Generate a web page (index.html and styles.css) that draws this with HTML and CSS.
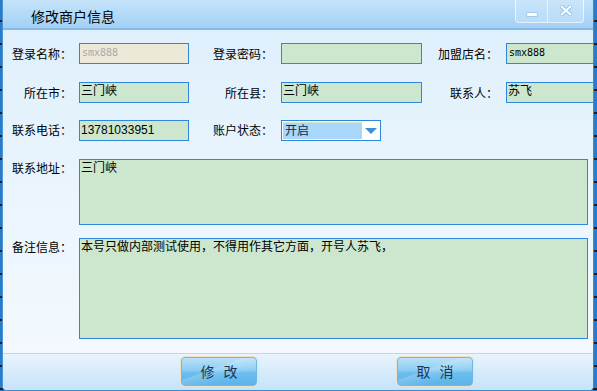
FILE: index.html
```html
<!DOCTYPE html>
<html lang="zh-CN">
<head>
<meta charset="utf-8">
<title>修改商户信息</title>
<link rel="stylesheet" href="styles.css">
</head>
<body>
<div class="window">
  <div class="titlebar">
    <span class="title">修改商户信息</span>
    <div class="win-btns">
      <div class="win-btn min"><span class="min-bar"></span></div>
      <div class="win-btn close">
        <svg width="12" height="11" viewBox="0 0 12 11"><path d="M1.5 1.5 L10.5 9.5 M10.5 1.5 L1.5 9.5" stroke="#8fc4ec" stroke-width="4" stroke-linecap="round"/><path d="M1.5 1.5 L10.5 9.5 M10.5 1.5 L1.5 9.5" stroke="#ffffff" stroke-width="2" stroke-linecap="round"/></svg>
      </div>
    </div>
  </div>
  <div class="content">
    <div class="grid">
      <div class="lbl l1">登录名称：</div>
      <div class="field disabled"><span class="mono">smx888</span></div>
      <div class="lbl l2">登录密码：</div>
      <div class="field"></div>
      <div class="lbl l3">加盟店名：</div>
      <div class="field wide"><span class="mono dark">smx888</span></div>

      <div class="lbl l1">所在市：</div>
      <div class="field">三门峡</div>
      <div class="lbl l2">所在县：</div>
      <div class="field">三门峡</div>
      <div class="lbl l3">联系人：</div>
      <div class="field wide">苏飞</div>

      <div class="lbl l1">联系电话：</div>
      <div class="field"><span class="digits">13781033951</span></div>
      <div class="lbl l2">账户状态：</div>
      <div class="select">
        <div class="sel-val">开启</div>
        <div class="sel-arrow"><span class="tri"></span></div>
      </div>
    </div>
    <div class="area-row addr">
      <div class="lbl area-lbl">联系地址：</div>
      <div class="area a1">三门峡</div>
    </div>
    <div class="area-row note">
      <div class="lbl area-lbl">备注信息：</div>
      <div class="area a2 punct">本号只做内部测试使用，不得用作其它方面，开号人苏飞，</div>
    </div>
  </div>
  <div class="footer">
    <button class="btn">修 改</button>
    <button class="btn">取 消</button>
  </div>
</div>
</body>
</html>
```

FILE: styles.css
```css
* { box-sizing: border-box; }
html, body { margin: 0; padding: 0; }
body {
  width: 597px;
  height: 391px;
  overflow: hidden;
  background: #2a7cc8 repeating-linear-gradient(to bottom, #2a7cc8 0, #2a7cc8 20px, #1b1b1b 20px, #1b1b1b 22px, #2a7cc8 22px, #2a7cc8 23px);
  font-family: "Noto Sans CJK SC", "Liberation Sans", sans-serif;
  font-size: 12px;
  color: #000;
}
.window {
  margin-left: 2px;
  width: 592px;
  height: 391px;
  border-left: 1px solid #4a92d6;
  border-right: 1px solid #3b8ad6;
  border-bottom: 1px solid #3b8ad6;
  border-radius: 0 0 5px 5px;
  overflow: hidden;
  display: flex;
  flex-direction: column;
  background: #e0f1fc;
}
.titlebar {
  height: 30px;
  flex: none;
  background: linear-gradient(to bottom, #c6e3fa 0%, #b3daf8 50%, #a4d0f5 100%);
  border-bottom: 2px solid #82bbe9;
  display: flex;
  align-items: flex-start;
  position: relative;
}
.title {
  font-size: 14px;
  line-height: 16px;
  margin: 8px 0 0 28px;
  color: #000;
}
.win-btns {
  margin-left: auto;
  margin-right: 9px;
  display: flex;
}
.win-btn {
  height: 23px;
  border: 1px solid rgba(255,255,255,0.65);
  border-top: none;
  background: linear-gradient(to bottom, rgba(255,255,255,0.08), rgba(255,255,255,0.2));
  display: flex;
  align-items: center;
  justify-content: center;
}
.win-btn.min { width: 32px; border-radius: 0 0 0 4px; border-right: none; }
.win-btn.close { width: 37px; border-radius: 0 0 4px 0; border-left: 1px solid rgba(255,255,255,0.55); }
.min-bar {
  display: block;
  width: 10px;
  height: 3px;
  margin-top: 7px;
  background: #fff;
  border-radius: 1px;
  box-shadow: 0 0 0 1px #9ccbef;
}
.close svg { display: block; margin-top: -2px; }

.content {
  flex: 1;
  background: linear-gradient(to bottom, #dff0fc 0%, #eaf5fd 50%, #f3f9fe 100%);
  padding-top: 13px;
}
.grid {
  display: grid;
  grid-template-columns: 76px 110px 92px 141px 84px 100px;
  grid-template-rows: 21px 21px 21px;
  row-gap: 18px;
  align-items: center;
}
.grid > :nth-child(n+13) { margin-top: -3px; }
.lbl {
  font-family: "Noto Sans CJK TC", "Noto Sans CJK SC", sans-serif;
  text-align: right;
  line-height: 14px;
  white-space: nowrap;
}
.punct { font-family: "Noto Sans CJK TC", "Noto Sans CJK SC", sans-serif; }
.l1 { padding-right: 7px; }
.l2 { padding-right: 8px; }
.l3 { padding-right: 8px; }
.field {
  height: 21px;
  border: 1px solid #2e87dd;
  background: #cce7cd;
  padding: 0 1px;
  line-height: 14px;
  white-space: nowrap;
  overflow: hidden;
}
.field.disabled { background: #ece9d8; }
.mono {
  font-family: "DejaVu Sans Mono", monospace;
  font-size: 10px;
  color: #a8a8a8;
  display: inline-block;
  padding: 2px 0 0 1px;
}
.mono.dark { color: #000; }
.digits {
  font-family: "Liberation Sans", sans-serif;
  font-size: 12px;
  display: inline-block;
  padding-top: 2px;
}
.field.wide { width: 100px; }

.select {
  width: 100px;
  height: 21px;
  border: 1px solid #2e87dd;
  background: #fff;
  display: flex;
  padding: 1px;
}
.sel-val {
  width: 79px;
  background: #a9d6fb;
  border-top: 1px solid #cfe9c9;
  color: #0d2a52;
  line-height: 14px;
  padding-left: 2px;
}
.sel-arrow {
  flex: 1;
  display: flex;
  align-items: center;
  justify-content: center;
}
.tri {
  display: block;
  width: 0;
  height: 0;
  border-left: 6px solid transparent;
  border-right: 6px solid transparent;
  border-top: 6px solid #3f8fd6;
  margin-top: 1px;
}

.area-row {
  display: flex;
  align-items: flex-start;
}
.area-lbl {
  width: 76px;
  padding-right: 7px;
  line-height: 18px;
}
.area {
  width: 509px;
  border: 1px solid #2e87dd;
  background: #cce7cd;
  padding: 0 1px;
  line-height: 14px;
}
.addr { margin-top: 17px; }
.a1 { height: 66px; }
.note { margin-top: 13px; }
.a2 { height: 101px; }

.footer {
  height: 37px;
  flex: none;
  border-top: 1px solid #b4daf5;
  background: linear-gradient(to bottom, #e9f4fd 0%, #d7ebfb 50%, #c5e3f9 100%);
  display: flex;
  align-items: flex-start;
  padding-top: 3px;
  padding-left: 178px;
  gap: 140px;
}
.btn {
  width: 76px;
  height: 29px;
  border: 1px solid #6fb9ea;
  border-radius: 4px;
  box-shadow: 0 0 0 1px #efe0c6;
  background:
    linear-gradient(160deg, rgba(255,255,255,0) 0%, rgba(255,255,255,0) 40%, rgba(255,255,255,0.18) 42%, rgba(255,255,255,0) 70%),
    linear-gradient(to bottom, #b9e1f8 0%, #8ccdf3 45%, #6cbdee 55%, #5db4ea 100%);
  font-family: "Noto Sans CJK SC", sans-serif;
  font-size: 14px;
  color: #1b3655;
  letter-spacing: 3px;
  padding: 0 0 0 3px;
  line-height: 27px;
  cursor: pointer;
}
```
